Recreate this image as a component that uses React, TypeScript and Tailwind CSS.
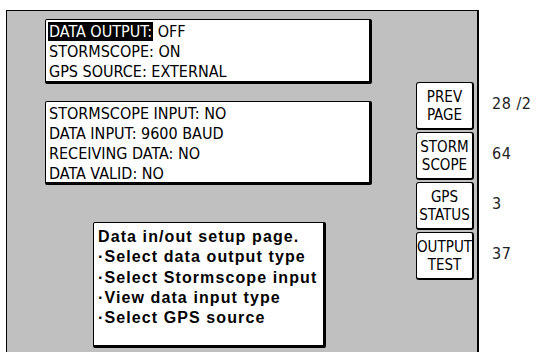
import React from 'react'

const narrow = { fontFamily: '"DejaVu Sans Condensed", "DejaVu Sans", sans-serif', fontStretch: 'condensed' }
const bold = { fontFamily: '"Liberation Sans", Arial, sans-serif' }

const buttons = [
    { top: 'PREV', bottom: 'PAGE', value: '28 /2' },
    { top: 'STORM', bottom: 'SCOPE', value: '64' },
    { top: 'GPS', bottom: 'STATUS', value: '3' },
    { top: 'OUTPUT', bottom: 'TEST', value: '37' },
]

const inputLines = ['STORMSCOPE INPUT: NO', 'DATA INPUT: 9600 BAUD', 'RECEIVING DATA: NO', 'DATA VALID: NO']
const helpLines = ['·Select data output type', '·Select Stormscope input', '·View data input type', '·Select GPS source']

const Box: React.FC<{ className: string, children: React.ReactNode }> = ({ className, children }) => (
    <div className={`bg-white border border-black border-r-[3px] border-b-[3px] rounded-[2px] ${className}`}>
        {children}
    </div>
)

export default function App() {
    return (
        <div className="w-[536px] h-[352px] bg-white overflow-hidden flex text-black">
            <div className="ml-[6px] mt-[10px] w-[473px] h-[350px] bg-[#c0c0c0] border-t border-l border-r-2 border-black flex">
                <div className="pl-[38px] pt-[8px] flex flex-col">
                    <Box className="w-[327px] h-[65px] pl-[2px] pt-[2px]">
                        <div style={narrow} className="text-[16px] leading-[20px]">
                            <div><span className="bg-black text-white px-[1px]">DATA OUTPUT:</span> OFF</div>
                            <div className="pl-[1px]">STORMSCOPE: ON</div>
                            <div className="pl-[1px]">GPS SOURCE: EXTERNAL</div>
                        </div>
                    </Box>
                    <Box className="w-[327px] h-[84px] mt-[17px] pl-[3px] pt-[2px]">
                        <div style={narrow} className="text-[16px] leading-[20px]">
                            {inputLines.map((line, index) => (
                                <div key={index}>{line}</div>
                            ))}
                        </div>
                    </Box>
                    <Box className="w-[233px] h-[126px] mt-[37px] ml-[48px] pl-[4px] pt-[4px]">
                        <div style={bold} className="text-[16px] leading-[20.3px] font-bold tracking-[1.1px]">
                            <div>Data in/out setup page.</div>
                            {helpLines.map((line, index) => (
                                <div key={index}>{line}</div>
                            ))}
                        </div>
                    </Box>
                </div>
                <div className="ml-[44px] pt-[71px] flex flex-col gap-[2px]">
                    {buttons.map((b, index) => (
                        <div key={index} className="w-[58px] h-[48px] bg-white border border-black border-r-[2px] border-b-[2px] rounded-[3px] flex flex-col items-center justify-center">
                            <span style={narrow} className="text-[15px] leading-[18px]">{b.top}</span>
                            <span style={narrow} className="text-[15px] leading-[18px]">{b.bottom}</span>
                        </div>
                    ))}
                </div>
            </div>
            <div className="ml-[13px] pt-[94px] flex flex-col">
                {buttons.map((b, index) => (
                    <div key={index} style={narrow} className="h-[50px] text-[16px] leading-[20px] tracking-[0.5px] text-[#222]">{b.value}</div>
                ))}
            </div>
        </div>
    )
}
